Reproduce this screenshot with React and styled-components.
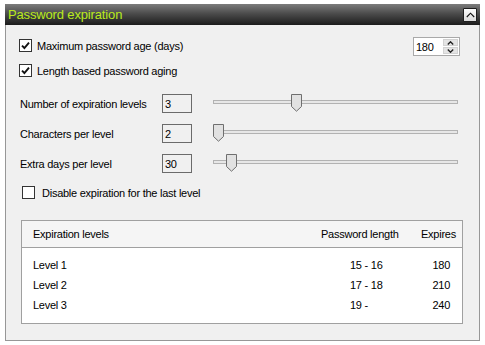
import React from "react";
import styled, { createGlobalStyle } from "styled-components";

const GlobalStyle = createGlobalStyle`
  html, body {
    margin: 0;
    padding: 0;
    background: #fff;
  }
  body {
    font-family: "Liberation Sans", Arial, sans-serif;
    font-size: 11px;
    letter-spacing: -0.25px;
    color: #000;
  }
`;

const sliders = [
  { label: "Number of expiration levels", value: 3, min: 1, max: 7 },
  { label: "Characters per level", value: 2, min: 2, max: 10 },
  { label: "Extra days per level", value: 30, min: 0, max: 540 },
];

const levels = [
  { name: "Level 1", length: "15 - 16", expires: 180 },
  { name: "Level 2", length: "17 - 18", expires: 210 },
  { name: "Level 3", length: "19 -", expires: 240 },
];

const TRACK_WIDTH = 245;
const THUMB_WIDTH = 11;

const Checkbox = ({ checked }) => (
  <CheckBox>
    {checked ? (
      <svg width="9" height="9" viewBox="0 0 9 9">
        <path
          d="M1 4.6 L3.4 7 L8 1.6"
          fill="none"
          stroke="#111"
          strokeWidth="1.9"
        />
      </svg>
    ) : null}
  </CheckBox>
);

const Chevron = ({ down }) => (
  <svg width="7" height="4" viewBox="0 0 7 4">
    <path
      d={down ? "M0.8 0.6 L3.5 3.2 L6.2 0.6" : "M0.8 3.4 L3.5 0.8 L6.2 3.4"}
      fill="none"
      stroke="#222"
      strokeWidth="1.4"
    />
  </svg>
);

const Slider = ({ value, min, max }) => {
  const left = Math.round(((value - min) / (max - min)) * (TRACK_WIDTH - THUMB_WIDTH));
  return (
    <SliderWrap>
      <Track />
      <Thumb style={{ left }}>
        <svg width="11" height="18" viewBox="0 0 11 18">
          <path
            d="M0.5 0.5 H10.5 V12.5 L5.5 17.2 L0.5 12.5 Z"
            fill="#e1e1e1"
            stroke="#6f6f6f"
          />
        </svg>
      </Thumb>
    </SliderWrap>
  );
};

export default function App() {
  return (
    <>
      <GlobalStyle />
      <Page>
        <Panel>
          <Header>
            <Title>Password expiration</Title>
            <CollapseButton>
              <svg width="9" height="6" viewBox="0 0 9 6">
                <path d="M0.8 5 L4.5 1.2 L8.2 5" fill="none" stroke="#111" strokeWidth="1.1" />
              </svg>
            </CollapseButton>
          </Header>
          <Body>
            <TopRow>
              <CheckField $raise={2}>
                <Checkbox checked />
                <CheckLabel $gap={5}>Maximum password age (days)</CheckLabel>
              </CheckField>
              <Spinner>
                <SpinValue>180</SpinValue>
                <SpinButtons>
                  <SpinButton>
                    <Chevron />
                  </SpinButton>
                  <SpinButton>
                    <Chevron down />
                  </SpinButton>
                </SpinButtons>
              </Spinner>
            </TopRow>
            <CheckField $mt={8}>
              <Checkbox checked />
              <CheckLabel $gap={5}>Length based password aging</CheckLabel>
            </CheckField>

            {sliders.map((s, i) => (
              <SettingRow key={s.label} $mt={i === 0 ? 17 : 11}>
                <SettingLabel>{s.label}</SettingLabel>
                <ValueBox>{s.value}</ValueBox>
                <Slider value={s.value} min={s.min} max={s.max} />
              </SettingRow>
            ))}

            <CheckField $mt={13} $indent={3}>
              <Checkbox />
              <CheckLabel $gap={7}>Disable expiration for the last level</CheckLabel>
            </CheckField>

            <List>
              <ListHead>
                <span>Expiration levels</span>
                <span>Password length</span>
                <span>Expires</span>
              </ListHead>
              <ListBody>
                {levels.map((l) => (
                  <ListRow key={l.name}>
                    <span>{l.name}</span>
                    <LengthCell>{l.length}</LengthCell>
                    <ExpiresCell>{l.expires}</ExpiresCell>
                  </ListRow>
                ))}
              </ListBody>
            </List>
          </Body>
        </Panel>
      </Page>
    </>
  );
}

const Page = styled.div`
  padding: 4px 0 0 5px;
`;

const Panel = styled.section`
  width: 475px;
  display: flex;
  flex-direction: column;
`;

const Header = styled.header`
  height: 21px;
  display: flex;
  align-items: center;
  justify-content: space-between;
  padding: 0 3px 0 3px;
  background: linear-gradient(#7c7c7c 0%, #4c4c4c 45%, #1c1c1c 100%);
`;

const Title = styled.span`
  color: #b9ea1c;
  font-size: 13px;
  letter-spacing: -0.15px;
  line-height: 21px;
`;

const CollapseButton = styled.div`
  width: 14px;
  height: 14px;
  box-sizing: border-box;
  border: 1px solid #1e1e1e;
  border-radius: 1px;
  background: linear-gradient(#fdfdfd, #dadada);
  display: flex;
  align-items: center;
  justify-content: center;
`;

const Body = styled.div`
  background: #f0f0f0;
  border: 1px solid #979797;
  border-top: none;
  padding: 12px 19px 16px 13px;
  display: flex;
  flex-direction: column;
`;

const TopRow = styled.div`
  height: 19px;
  display: flex;
  align-items: flex-start;
  justify-content: space-between;
`;

const CheckField = styled.div`
  height: 13px;
  display: flex;
  align-items: center;
  margin-top: ${(p) => p.$mt || p.$raise || 0}px;
  margin-left: ${(p) => p.$indent || 0}px;
`;

const CheckBox = styled.span`
  width: 13px;
  height: 13px;
  box-sizing: border-box;
  border: 1px solid #333;
  background: #fff;
  display: inline-flex;
  align-items: center;
  justify-content: center;
  flex-shrink: 0;
`;

const CheckLabel = styled.span`
  margin-left: ${(p) => p.$gap}px;
  white-space: nowrap;
`;

const Spinner = styled.div`
  width: 47px;
  height: 19px;
  box-sizing: border-box;
  border: 1px solid #a9a9a9;
  background: #fff;
  display: flex;
`;

const SpinValue = styled.span`
  flex: 1;
  padding-left: 2px;
  display: flex;
  align-items: center;
`;

const SpinButtons = styled.div`
  width: 16px;
  display: flex;
  flex-direction: column;
  gap: 1px;
  padding: 1px 1px 1px 0;
  box-sizing: border-box;
`;

const SpinButton = styled.div`
  flex: 1;
  background: #e4e4e4;
  border: 1px solid #d2d2d2;
  display: flex;
  align-items: center;
  justify-content: center;
`;

const SettingRow = styled.div`
  height: 19px;
  display: flex;
  align-items: center;
  margin-top: ${(p) => p.$mt}px;
  padding-left: 1px;
`;

const SettingLabel = styled.span`
  width: 142px;
  white-space: nowrap;
`;

const ValueBox = styled.div`
  width: 30px;
  height: 19px;
  box-sizing: border-box;
  border: 1px solid #6b6b6b;
  padding-left: 2px;
  display: flex;
  align-items: center;
`;

const SliderWrap = styled.div`
  position: relative;
  width: ${TRACK_WIDTH}px;
  height: 19px;
  margin-left: 21px;
`;

const Track = styled.div`
  margin-top: 6px;
  height: 4px;
  box-sizing: border-box;
  border: 1px solid #b2b2b2;
  background: #e7e7e7;
`;

const Thumb = styled.div`
  position: absolute;
  top: 0;
  width: ${THUMB_WIDTH}px;
  height: 18px;
  line-height: 0;
`;

const List = styled.div`
  width: 442px;
  height: 104px;
  margin: 21px 0 0 2px;
  box-sizing: border-box;
  border: 1px solid #a0a0a0;
  background: #fff;
`;

const columns = "288px 100px 33px";

const ListHead = styled.div`
  display: grid;
  grid-template-columns: ${columns};
  align-items: center;
  height: 27px;
  box-sizing: border-box;
  padding-left: 11px;
  background: #f5f5f5;
  border-bottom: 1px solid #a0a0a0;
  white-space: nowrap;
`;

const ListBody = styled.div`
  padding-top: 7px;
`;

const ListRow = styled.div`
  display: grid;
  grid-template-columns: ${columns};
  align-items: center;
  height: 20px;
  padding-left: 11px;
`;

const LengthCell = styled.span`
  padding-left: 29px;
`;

const ExpiresCell = styled.span`
  text-align: right;
  padding-right: 4px;
`;
